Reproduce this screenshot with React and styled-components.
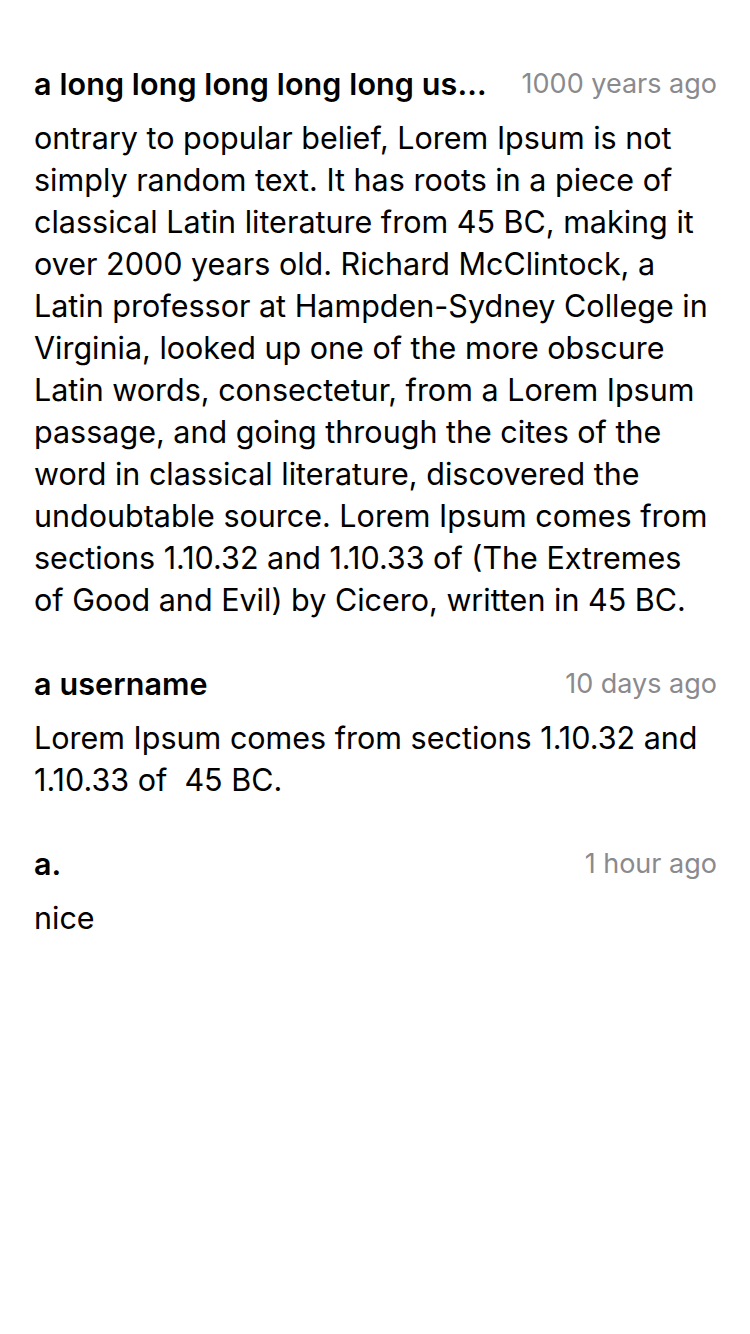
import React from "react";
import styled, { createGlobalStyle } from "styled-components";

const comments = [
  {
    id: 1,
    user: "a long long long long long us\u2026",
    time: "1000 years ago",
    text:
      "ontrary to popular belief, Lorem Ipsum is not simply random text. It has roots in a piece of classical Latin literature from 45 BC, making it over 2000 years old. Richard McClintock, a Latin professor at Hampden-Sydney College in Virginia, looked up one of the more obscure Latin words, consectetur, from a Lorem Ipsum passage, and going through the cites of the word in classical literature, discovered the undoubtable source. Lorem Ipsum comes from sections 1.10.32 and 1.10.33 of (The Extremes of Good and Evil) by Cicero, written in 45 BC.",
  },
  {
    id: 2,
    user: "a username",
    time: "10 days ago",
    text: "Lorem Ipsum comes from sections 1.10.32 and 1.10.33 of  45 BC.",
  },
  { id: 3, user: "a.", time: "1 hour ago", text: "nice" },
];

function App() {
  return (
    <>
      <GlobalStyle />
      <CommentList>
        {comments.map((c) => (
          <Comment key={c.id}>
            <CommentHeader>
              <UserName>{c.user}</UserName>
              <TimeAgo>{c.time}</TimeAgo>
            </CommentHeader>
            <CommentText>{c.text}</CommentText>
          </Comment>
        ))}
      </CommentList>
    </>
  );
}

export default App;

const GlobalStyle = createGlobalStyle`
  body {
    margin: 0;
    background: #ffffff;
    font-family: Inter, "Noto Sans", sans-serif;
    color: #000;
  }
`;

const CommentList = styled.div`
  display: flex;
  flex-direction: column;
  gap: 44px;
  padding: 65px 33px 0 34px;
`;

const Comment = styled.div`
  display: flex;
  flex-direction: column;
  gap: 16px;
`;

const CommentHeader = styled.div`
  display: flex;
  align-items: center;
  justify-content: space-between;
  gap: 30px;
  height: 36px;
`;

const UserName = styled.span`
  flex: 1;
  min-width: 0;
  font-size: 30.5px;
  font-weight: 600;
  letter-spacing: 0.1px;
  white-space: nowrap;
  overflow: hidden;
  text-overflow: ellipsis;
`;

const TimeAgo = styled.span`
  flex-shrink: 0;
  font-size: 27px;
  color: #8a8a8e;
`;

const CommentText = styled.p`
  margin: 0;
  font-size: 30.5px;
  line-height: 42px;
  white-space: pre-wrap;
`;
